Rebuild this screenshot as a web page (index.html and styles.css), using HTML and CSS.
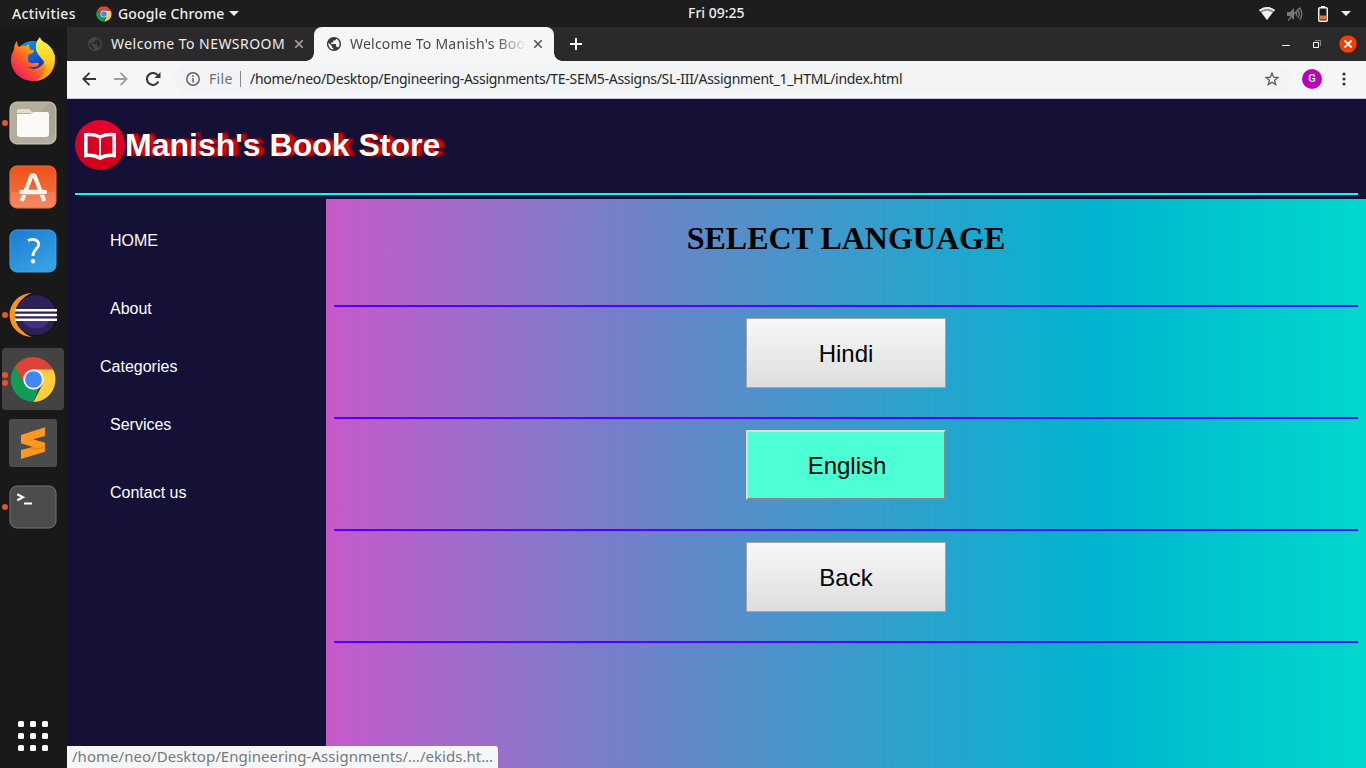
FILE: index.html
```html
<!DOCTYPE html>
<html lang="en">
<head>
<meta charset="utf-8">
<title>Welcome To Manish's Book Store</title>
<link rel="stylesheet" href="styles.css">
</head>
<body>
<svg width="0" height="0" class="defs">
  <defs>
    <symbol id="chrome" viewBox="0 0 48 48">
      <path fill="#ffcd40" d="M43.900 13.500A23 23 0 0 1 24 47L33.100 29.250 24 13.500z"/>
      <path fill="#0f9d58" d="M4.900 11 14.900 29.250A10.500 10.500 0 0 0 29 33.200L24 47A23 23 0 0 1 4.900 11z"/>
      <path fill="#db4437" d="M24 1A23 23 0 0 0 4.900 11L14.900 29.250 24 13.500H43.900A23 23 0 0 0 24 1z"/>
      <circle cx="24" cy="24" r="10.500" fill="#f1f1f1"/><circle cx="24" cy="24" r="8.500" fill="#4285f4"/>
    </symbol>
    <symbol id="globe" viewBox="2 2 20 20">
      <path fill="currentColor" d="M12 2C6.480 2 2 6.480 2 12s4.480 10 10 10 10-4.480 10-10S17.520 2 12 2zm-1 17.930c-3.950-.49-7-3.850-7-7.930 0-.62.08-1.210.21-1.790L9 15v1c0 1.100.9 2 2 2v1.930zm6.900-2.540c-.26-.81-1-1.390-1.900-1.390h-1v-3c0-.55-.45-1-1-1H8v-2h2c.55 0 1-.45 1-1V7h2c1.100 0 2-.9 2-2v-.41c2.930 1.190 5 4.060 5 7.410 0 2.080-.8 3.970-2.100 5.390z"/>
    </symbol>
    <symbol id="cross" viewBox="0 0 10 10"><path d="m1.300 1.300 7.400 7.400m0-7.400L1.300 8.700" fill="none" stroke="currentColor" stroke-width="1.600"/></symbol>
  </defs>
</svg>

<header class="topbar">
  <span class="activities">Activities</span>
  <svg class="app-icon" width="16" height="16"><use href="#chrome"/></svg>
  <span class="app-name">Google Chrome</span>
  <svg width="10" height="5"><path fill="#eee" d="M0 0h10L5 5z"/></svg>
  <time class="clock">Fri 09:25</time>
  <div class="tray">
    <svg width="16" height="13" viewBox="0 0 16 13"><path fill="#ddd" fill-opacity=".6" d="M0 3Q8-3 16 3L8 13z"/><path fill="#f2f2f2" d="M0 3Q8-3 16 3l-1 1.300Q8-1 1 4.300zM2.600 5.400Q8 1.900 13.400 5.400L8 13z"/></svg>
    <svg width="16" height="14" viewBox="0 0 16 14" fill="none" stroke="#777" stroke-width="1.300"><path fill="#777" stroke="none" d="M0 5h3l4-4v12L3 9H0z"/><path d="M9 5q1.600 2 0 4m1.800-6q3 4 0 8m2-10q4 6 0 12M1 13.500 13 .5"/></svg>
    <svg width="10" height="16" viewBox="0 0 10 16"><path fill="#f2f2f2" d="M3 0h4v1.500H3z"/><rect x=".75" y="1.750" width="8.500" height="13.500" rx="1" fill="none" stroke="#f2f2f2" stroke-width="1.500"/><path fill="#f37335" d="M2 9.500h6v4H2z"/></svg>
    <svg width="10" height="5"><path fill="#eee" d="M0 0h10L5 5z"/></svg>
  </div>
</header>

<div class="desktop">
  <nav class="dock">
    <div class="dock-item">
      <svg width="46" height="46" viewBox="0 0 46 46">
        <defs><linearGradient id="fx" x1="1" y1="0" x2="0" y2="1"><stop offset=".1" stop-color="#fff34a"/><stop offset=".38" stop-color="#ffa312"/><stop offset=".62" stop-color="#ff552b"/><stop offset=".95" stop-color="#f10a6e"/></linearGradient>
        <linearGradient id="fb" x1="0" y1="0" x2=".5" y2="1"><stop offset="0" stop-color="#00a5ff"/><stop offset=".5" stop-color="#0867df"/><stop offset="1" stop-color="#32148d"/></linearGradient>
        <linearGradient id="fy" x1="0" y1="0" x2="0" y2="1"><stop offset="0" stop-color="#fff44f"/><stop offset=".5" stop-color="#ffd320"/><stop offset="1" stop-color="#ff9010"/></linearGradient></defs>
        <circle cx="23" cy="24" r="19" fill="url(#fb)"/>
        <path fill="url(#fx)" d="M7 5q0 4 2 6 4-2 7-1l3-2q0 5 2 6h3l-1 3-5 2v5q1 4 6 3 5-1 5 1-1 3-5 3-4 1-7-1 5 5 11 2 7-3 7-11l10-2c-1 16-11 26-22 26C11 45 1 36 1 24q0-6 3-10 0-6 3-9z"/>
        <path fill="url(#fy)" d="M30 1q1 4 6 6c7 5 9 11 9 17 0 11-8 20-19 21 8-5 10-11 9-17-1-5-8-8-9-15q-1-7 4-12z"/>
      </svg>
    </div>
    <div class="dock-item running">
      <svg width="48" height="44" viewBox="0 0 48 44"><rect x="1" y="1" width="46" height="42" rx="7" fill="#b4ad9c" stroke="#d2ccbe"/><path fill="#a19b8c" d="M40 2h0L10 36h30q6 0 6-6V8q0-6-6-6z" opacity=".5"/><path fill="#e2ddd2" d="M8 10q0-2 2-2h10l4 4H8z"/><path fill="#faf9f7" d="M8 14q0-1 1-1h12l4-2h13q2 0 2 2v20q0 3-3 3H11q-3 0-3-3z"/></svg>
    </div>
    <div class="dock-item">
      <svg width="48" height="44" viewBox="0 0 48 44"><defs><linearGradient id="sw" x2="0" y2="1"><stop stop-color="#f0501a"/><stop offset="1" stop-color="#f2794a"/></linearGradient></defs><rect x="1" y="1" width="46" height="42" rx="7" fill="url(#sw)" stroke="#f4763f"/><path fill="#fff" fill-opacity=".12" d="M2 27h44v10q0 5-5 5H7q-5 0-5-5z"/><path fill="none" stroke="#fff5ef" stroke-width="4.200" stroke-linejoin="bevel" d="M12.800 36 22.600 10.300h2.800L35.200 36"/><path stroke="#fff5ef" stroke-width="4.500" stroke-linecap="round" d="M12.200 27h23.600"/><path stroke="#e9a58a" stroke-width="1" d="M13 29.500h22"/></svg>
    </div>
    <div class="dock-item">
      <svg width="48" height="44" viewBox="0 0 48 44"><defs><linearGradient id="hp" x2=".6" y2="1"><stop stop-color="#1b7bd1"/><stop offset="1" stop-color="#34a1e4"/></linearGradient></defs><rect x="1" y="1" width="46" height="42" rx="7" fill="url(#hp)" stroke="#45a4e2"/><path fill="none" stroke="#fff" stroke-width="2.800" d="M19 11.500q5-2.300 8.500 0c3.400 2.400 2.500 6-.3 8.500-2.500 2.200-3.200 3.800-3.200 7"/><circle cx="24" cy="32.300" r="2.200" fill="#fff"/></svg>
    </div>
    <div class="dock-item running">
      <svg width="48" height="44" viewBox="0 0 48 44"><path fill="#f7941e" d="M23 0A22.500 22 0 0 0 23 44Q10 40 8 22 10 4 23 0z"/><circle cx="27" cy="22" r="21" fill="#140f1f"/><circle cx="27" cy="22" r="20" fill="#2c2255"/><path fill="#433085" d="M13 26a15 15 0 0 0 28 0z"/><path stroke="#fff" stroke-width="2.600" d="M6 17.200h42M6 22h42M6 26.800h42"/></svg>
    </div>
    <div class="dock-item active running twice">
      <svg width="47" height="47"><use href="#chrome"/></svg>
    </div>
    <div class="dock-item">
      <svg width="48" height="48" viewBox="0 0 48 48"><rect width="48" height="48" rx="3" fill="#4b4b4b"/><path fill="#ff9820" d="M12 16 36 8.300V17l-12 3.300 12 3.500v8.900L12 40v-9l11.700-3L12 24.300z"/><path fill="#d87d17" d="m23.700 28 4.300 1.300 8-2v2l-8 2.300-9-2.400z" opacity=".5"/></svg>
    </div>
    <div class="dock-item running">
      <svg width="48" height="44" viewBox="0 0 48 44"><rect x="1" y="1" width="46" height="42" rx="7" fill="#4c4c4c" stroke="#747474"/><path fill="none" stroke="#fff" stroke-width="2.100" d="m8.300 9.300 5.700 3-5.700 3M15 18.500h8"/></svg>
    </div>
    <div class="dock-item show-apps">
      <i></i><i></i><i></i><i></i><i></i><i></i><i></i><i></i><i></i>
    </div>
  </nav>

  <div class="window">
    <div class="tabs">
      <div class="tab">
        <svg class="favicon" width="14" height="14"><use href="#globe"/></svg>
        <span class="tab-title">Welcome To NEWSROOM</span>
        <svg width="10" height="10"><use href="#cross"/></svg>
      </div>
      <div class="tab current">
        <svg class="favicon" width="14" height="14"><use href="#globe"/></svg>
        <span class="tab-title fading">Welcome To Manish's Boo</span>
        <svg width="10" height="10"><use href="#cross"/></svg>
      </div>
      <svg class="new-tab" width="12" height="12"><path d="M6 0v12M0 6h12" stroke="#fff" stroke-width="2"/></svg>
      <div class="controls">
        <svg width="8" height="10"><path fill="#fff" d="M0 6h8v1H0z"/></svg>
        <svg width="8" height="8" fill="none"><path stroke="#888" d="M2 .5h5.500V6"/><path stroke="#fff" d="M.5 2.500h5v5h-5z"/></svg>
        <svg width="18" height="18"><circle cx="9" cy="9" r="8.700" fill="#f83d00"/><path stroke="#fff" stroke-width="1.800" d="m5.500 5.500 7 7m0-7-7 7"/></svg>
      </div>
    </div>

    <div class="toolbar">
      <svg class="nav-icon" width="14" height="14" fill="none" stroke="#333639" stroke-width="1.900"><path d="M14 7H1.500M7.500 .8 1.300 7l6.200 6.200"/></svg>
      <svg class="nav-icon" width="14" height="14" fill="none" stroke="#9a9da0" stroke-width="1.900"><path d="M0 7h12.500M6.500 .8 12.700 7l-6.200 6.200"/></svg>
      <svg class="nav-icon" width="15" height="14" fill="none" stroke="#333639" stroke-width="2"><path d="M12.400 9.500A6 6 0 1 1 11.500 3"/><path fill="#333639" stroke="none" d="M14.500 0v6h-6z"/></svg>
      <div class="address">
        <svg width="14" height="14" fill="none" stroke="#5f6368" stroke-width="1.500"><circle cx="7" cy="7" r="6.200"/><path d="M7 6v4.500M7 3.300v1.600"/></svg>
        <span class="scheme">File</span>
        <span class="url">/home/neo/Desktop/Engineering-Assignments/TE-SEM5-Assigns/SL-III/Assignment_1_HTML/index.html</span>
        <svg class="star" width="14" height="14" viewBox="0 0 14 14" fill="none" stroke="#55595d" stroke-width="1.300"><path d="m7 1.200 1.600 4 4.400.3-3.400 2.800 1.100 4.200L7 10.200l-3.700 2.300 1.100-4.200L1 5.500l4.400-.3z"/></svg>
      </div>
      <span class="avatar">G</span>
      <svg width="4" height="14" fill="#333639"><circle cx="2" cy="2" r="1.600"/><circle cx="2" cy="7" r="1.600"/><circle cx="2" cy="12" r="1.600"/></svg>
    </div>

    <div class="page">
      <div class="masthead">
        <div class="brand">
          <svg width="50" height="50" viewBox="0 0 50 50"><defs><linearGradient id="bk" x2="0" y2="1"><stop stop-color="#e6002f"/><stop offset="1" stop-color="#d00016"/></linearGradient></defs><circle cx="25" cy="25" r="25" fill="url(#bk)"/><path fill="none" stroke="#fff" stroke-width="3.600" d="M25 17q-6-3.300-14.200-2.300V35.500Q19 34.500 25 38.200 31 34.500 39.200 35.500V14.700Q31 13.700 25 17z"/><path stroke="#fff" stroke-width="2" d="M25 16v23"/></svg>
          <h1>Manish's Book Store</h1>
        </div>
      </div>
      <div class="columns">
        <ul class="side">
          <li>HOME</li>
          <li>About</li>
          <li class="categories">Categories</li>
          <li>Services</li>
          <li>Contact us</li>
        </ul>
        <main class="languages">
          <h2>SELECT LANGUAGE</h2>
          <div class="choice"><button>Hindi</button></div>
          <div class="choice"><button class="hovered">English</button></div>
          <div class="choice"><button>Back</button></div>
        </main>
      </div>
      <div class="status">/home/neo/Desktop/Engineering-Assignments/…/ekids.ht…</div>
    </div>
  </div>
</div>
</body>
</html>
```
FILE: styles.css
```css
* { box-sizing: border-box; }
body { margin: 0; width: 1366px; height: 768px; overflow: hidden; background: #191919; font-family: "Noto Sans", "Open Sans", sans-serif; white-space: nowrap; }
svg { display: block; flex: none; }
.defs { position: absolute; }

.topbar { height: 27px; display: flex; align-items: center; background: #1d1d1d; color: #eee; font-size: 14px; font-weight: 500; padding-left: 12px; position: relative; }
.activities { width: 84px; letter-spacing: .35px; }
.app-icon { margin-right: 6px; }
.app-name { width: 111px; letter-spacing: .15px; }
.clock { position: absolute; left: 688px; top: 3px; }
.tray { margin-left: auto; margin-right: 15px; display: flex; align-items: center; gap: 13px; }
.tray svg:first-child { margin-right: -1px; }
.tray svg:nth-child(2) { margin-right: 2px; }

.desktop { display: flex; height: 741px; }
.dock { width: 67px; padding-right: 1px; display: flex; flex-direction: column; background: #191919; }
.dock-item { height: 64px; display: flex; align-items: center; justify-content: center; position: relative; }
.dock-item.active::after { content: ""; position: absolute; inset: 1px 2px; z-index: 0; border-radius: 4px; background: #434343; }
.dock-item svg { position: relative; z-index: 1; }
.running::before { content: ""; position: absolute; z-index: 2; left: 2px; top: 29px; width: 6px; height: 6px; border-radius: 50%; background: #e95420; }
.twice::before { top: 25px; box-shadow: 0 8px #e95420; }
.show-apps { margin-top: auto; display: grid; grid-template-columns: repeat(3, 6px); gap: 6px; align-content: center; }
.show-apps i { width: 6px; height: 6px; border-radius: 1.5px; background: #fff; }

.window { flex: 1; display: flex; flex-direction: column; background: #f5f6f8; min-width: 0; }
.tabs { height: 34px; display: flex; align-items: center; background: #2c292a; }
.tab { display: flex; align-items: center; height: 34px; width: 247px; padding: 0 10px 0 21px; color: #eee; font-size: 14px; }
.tab > svg { color: #aaa; }
.tab > .favicon { color: #454545; margin-right: 9px; }
.tab-title { flex: 1; padding-bottom: 1px; letter-spacing: .46px; }
.tab-title.fading { letter-spacing: .22px; -webkit-mask-image: linear-gradient(90deg, #000 145px, transparent 177px); mask-image: linear-gradient(90deg, #000 145px, transparent 177px); }
.tab.current { width: 240px; padding: 0 11px 0 13px; background: #f5f6f8; color: #45484b; border-radius: 8px 8px 0 0; position: relative; }
.tab.current > svg { color: #505356; }
.tab.current > .favicon { color: #3a3a3a; }
.tab.current::before, .tab.current::after { content: ""; position: absolute; bottom: 0; width: 8px; height: 8px; }
.tab.current::before { left: -8px; background: radial-gradient(circle at 0 0, transparent 7.5px, #f5f6f8 8px); }
.tab.current::after { right: -8px; background: radial-gradient(circle at 100% 0, transparent 7.5px, #f5f6f8 8px); }
.new-tab { margin-left: 16px; }
.controls { margin-left: auto; margin-right: 9px; display: flex; align-items: center; gap: 23px; }
.controls svg:last-child { margin-left: -5px; }

.toolbar { height: 38px; display: flex; align-items: center; padding: 0 20px 2px 15px; background: #f5f6f8; border-bottom: 1px solid #c6cad4; }
.nav-icon { margin-right: 18px; }
.address { flex: 1; height: 28px; margin-left: -4px; display: flex; align-items: center; padding: 0 12px 0 11px; border-radius: 14px; background: #f1f3f4; font-size: 14px; }
.scheme { margin-left: 9px; width: 32px; border-right: 1px solid #85888c; line-height: 16px; color: #6b6f74; letter-spacing: .3px; }
.url { margin-left: 9px; color: #25272a; letter-spacing: -.29px; }
.star { margin-left: auto; }
.avatar { width: 20px; height: 20px; margin: 0 20px 0 11px; border-radius: 50%; background: #bb00bd; color: #fff; font: 500 11px/20px Roboto, sans-serif; text-align: center; }

.page { flex: 1; display: flex; flex-direction: column; background: #151035; position: relative; min-height: 0; font-family: "Liberation Sans", Arial, sans-serif; }
.masthead { height: 100px; padding: 21px 8px 4px; display: flex; }
.brand { flex: 1; display: flex; border-bottom: 2px solid #00ffff; }
.brand h1 { margin: 7px 0 0; font-size: 32px; line-height: 36px; color: #fff; text-shadow: 5px 0 3px #ff0000; }
.columns { flex: 1; display: flex; min-height: 0; }
.side { width: 259px; margin: 0; padding: 33px 0 0 43px; list-style: none; color: #fff; font-size: 16px; line-height: 18px; }
.side li { margin-bottom: 50px; }
.side li:nth-child(2), .side .categories { margin-bottom: 40px; }
.side .categories { margin-left: -10px; }
.languages { flex: 1; padding: 0 8px; background: linear-gradient(90deg, #c65ac9 0%, #5c8bc9 37%, #00b5cf 74%, #00d8cd 100%); }
.languages h2 { margin: 0; height: 106px; padding-top: 21px; font: bold 32px/37px "Liberation Serif", "Times New Roman", serif; text-align: center; color: #000; }
.choice { height: 112px; padding-top: 11px; border-top: 2px solid #5500ff; text-align: center; }
.choice:last-child { height: 114px; border-bottom: 2px solid #5500ff; }
.choice button { width: 200px; height: 70px; padding: 3px 6px 1px; border: 1px solid #a3a3a3; background: linear-gradient(#f8f8f8, #dddddd); font: 24px "Liberation Sans", Arial, sans-serif; color: #000; }
.choice button.hovered { border: 2px solid; border-color: #ddd #888 #888 #ddd; background: #4dffd5; padding-left: 8px; }
.status { position: absolute; left: 0; bottom: 0; width: 431px; height: 22px; padding-left: 5px; border-radius: 0 3px 0 0; background: #f5f6f8; color: #76797c; font: 15px/21px "Noto Sans", "Open Sans", sans-serif; letter-spacing: .03px; }
```
